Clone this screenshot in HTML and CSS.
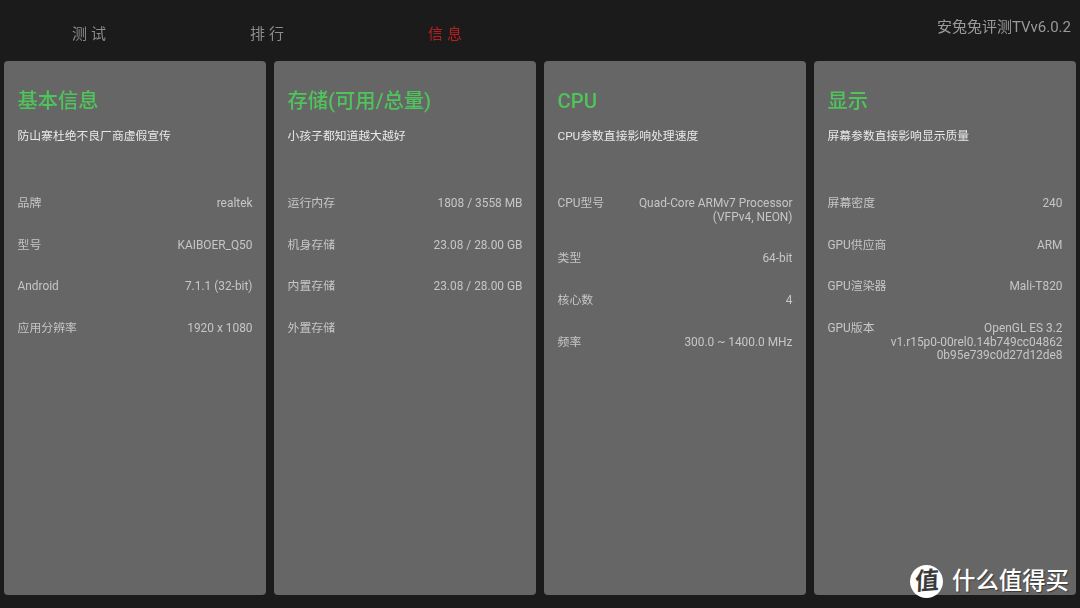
FILE: index.html
```html
<!DOCTYPE html>
<html lang="zh-CN">
<head>
<meta charset="utf-8">
<title>安兔兔评测TV</title>
<link rel="stylesheet" href="styles.css">
</head>
<body>
<div class="screen">
<header class="top">
  <nav class="tabs">
    <span class="tab">测试</span>
    <span class="tab">排行</span>
    <span class="tab active">信息</span>
  </nav>
  <div class="version">安兔兔评测TVv6.0.2</div>
</header>
<main class="cards">
  <section class="card">
    <h2>基本信息</h2>
    <p class="sub">防山寨杜绝不良厂商虚假宣传</p>
    <dl class="rows">
      <div class="row"><dt>品牌</dt><dd>realtek</dd></div>
      <div class="row"><dt>型号</dt><dd>KAIBOER_Q50</dd></div>
      <div class="row"><dt>Android</dt><dd>7.1.1 (32-bit)</dd></div>
      <div class="row"><dt>应用分辨率</dt><dd>1920 x 1080</dd></div>
    </dl>
  </section>
  <section class="card">
    <h2>存储(可用/总量)</h2>
    <p class="sub">小孩子都知道越大越好</p>
    <dl class="rows">
      <div class="row"><dt>运行内存</dt><dd>1808 / 3558 MB</dd></div>
      <div class="row"><dt>机身存储</dt><dd>23.08 / 28.00 GB</dd></div>
      <div class="row"><dt>内置存储</dt><dd>23.08 / 28.00 GB</dd></div>
      <div class="row"><dt>外置存储</dt><dd></dd></div>
    </dl>
  </section>
  <section class="card">
    <h2>CPU</h2>
    <p class="sub">CPU参数直接影响处理速度</p>
    <dl class="rows">
      <div class="row"><dt>CPU型号</dt><dd>Quad-Core ARMv7 Processor<br>(VFPv4, NEON)</dd></div>
      <div class="row"><dt>类型</dt><dd>64-bit</dd></div>
      <div class="row"><dt>核心数</dt><dd>4</dd></div>
      <div class="row"><dt>频率</dt><dd>300.0 ~ 1400.0 MHz</dd></div>
    </dl>
  </section>
  <section class="card">
    <h2>显示</h2>
    <p class="sub">屏幕参数直接影响显示质量</p>
    <dl class="rows">
      <div class="row"><dt>屏幕密度</dt><dd>240</dd></div>
      <div class="row"><dt>GPU供应商</dt><dd>ARM</dd></div>
      <div class="row"><dt>GPU渲染器</dt><dd>Mali-T820</dd></div>
      <div class="row"><dt>GPU版本</dt><dd>OpenGL ES 3.2<br>v1.r15p0-00rel0.14b749cc04862<br>0b95e739c0d27d12de8</dd></div>
    </dl>
  </section>
</main>
</div>
<div class="mark"><span class="mark-logo"><span class="mark-glyph">值</span></span><span class="mark-text">什么值得买</span></div>
</body>
</html>
```
FILE: styles.css
```css
* { box-sizing: border-box; }
html, body { margin: 0; height: 100%; }
body {
  width: 1080px;
  height: 608px;
  overflow: hidden;
  position: relative;
  background: #1b1b1b;
  font-family: Roboto, "Noto Sans CJK SC", sans-serif;
}
.screen {
  display: flex;
  flex-direction: column;
  height: 608px;
  filter: blur(0.35px);
}
.top {
  height: 61px;
  display: flex;
  justify-content: space-between;
  align-items: flex-start;
  padding: 0 9px 0 2px;
}
.tabs { display: flex; padding-top: 25px; }
.tab {
  width: 178px;
  text-align: center;
  font-size: 15px;
  line-height: 18px;
  letter-spacing: 4px;
  color: #8c8c8c;
}
.tab.active { color: #b4201f; }
.version {
  padding-top: 18px;
  font-size: 15px;
  line-height: 18px;
  color: #9a9a9a;
}
.cards {
  display: flex;
  gap: 8px;
  padding: 0 4px;
  height: 534px;
}
.card {
  flex: 0 0 262px;
  background: #666666;
  border-radius: 4px;
  padding: 26px 13.5px 0;
}
.card h2 {
  margin: 0;
  font-size: 20.3px;
  line-height: 28px;
  font-weight: 500;
  color: #4fc45a;
}
.sub {
  margin: 14px 0 0;
  font-size: 11.8px;
  line-height: 14px;
  color: #e8e8e8;
}
.rows {
  margin: 54px 0 0;
  display: flex;
  flex-direction: column;
  gap: 27.8px;
}
.row {
  display: flex;
  justify-content: space-between;
  font-size: 11.9px;
  line-height: 13.8px;
  color: #c6c6c6;
}
.row dt { flex: none; }
.row dd { margin: 0; text-align: right; }
.mark {
  position: absolute;
  left: 910px;
  top: 565px;
  display: flex;
  align-items: center;
  gap: 9px;
  color: #fff;
}
.mark-logo {
  width: 33px;
  height: 33px;
  border-radius: 50%;
  background: #fff;
  color: #3a3a3a;
  font-size: 24px;
  font-weight: 700;
  line-height: 32px;
  text-align: center;
}
.mark-glyph {
  display: inline-block;
  transform: rotate(-4deg) skewX(-6deg);
}
.mark-text {
  font-size: 23.4px;
  line-height: 33px;
  font-weight: 500;
  text-shadow: 1px 1px 1px rgba(0,0,0,.45);
}
```
